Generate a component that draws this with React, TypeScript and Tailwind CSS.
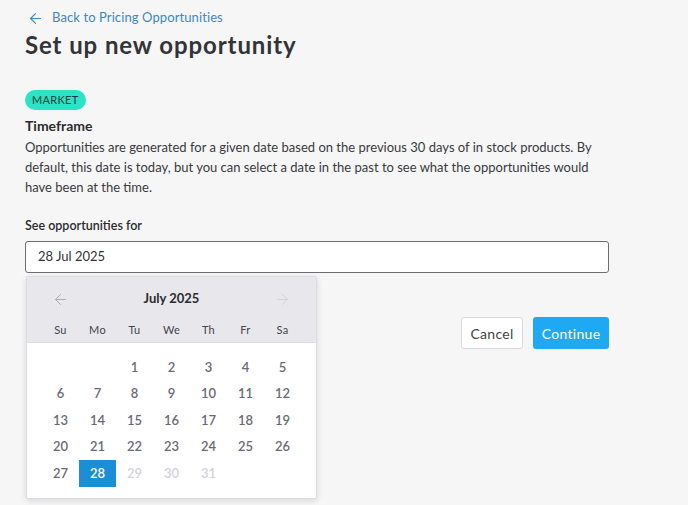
import { ArrowLeft, ArrowRight } from "lucide-react";

export default function App() {
  const weekdays = ["Su", "Mo", "Tu", "We", "Th", "Fr", "Sa"];
  // July 2025 starts on a Tuesday
  const days: (number | null)[] = [null, null];
  for (let d = 1; d <= 31; d++) days.push(d);

  return (
    <div className="min-h-[505px] bg-[#f6f6f6] px-[25px] pt-[8px] font-['Lato',sans-serif] text-[#333]">
      <div className="w-[584px]">
        {/* Back link */}
        <a className="flex h-[20px] items-center gap-[8px] text-[13px] text-[#3d87c6]">
          <ArrowLeft className="ml-[2px] h-[17px] w-[17px]" strokeWidth={1.6} />
          <span className="tracking-[0.1px]">Back to Pricing Opportunities</span>
        </a>

        <h1 className="mt-[2px] text-[24px] leading-[30px] font-bold tracking-[0.9px] text-[#333338]">
          Set up new opportunity
        </h1>

        <span className="mt-[30px] inline-flex h-[20px] items-center rounded-full bg-[#2be3c5] px-[7px] text-[11px] tracking-[0.3px] text-[#0f3f38]">
          MARKET
        </span>

        <h2 className="mt-[6px] text-[14px] leading-[20px] font-bold text-[#2c2c30]">
          Timeframe
        </h2>
        <p className="mt-[1px] text-[13px] leading-[20px] text-[#3a3a3e]">
          Opportunities are generated for a given date based on the previous 30 days of in stock products. By
          default, this date is today, but you can select a date in the past to see what the opportunities would
          have been at the time.
        </p>

        <label className="mt-[20px] block text-[12.5px] leading-[18px] font-semibold text-[#2c2c30]">
          See opportunities for
        </label>

        <div className="relative mt-[6px]">
          <div className="flex h-[32px] items-center rounded-[3px] border border-[#6e6e72] bg-white px-[12px] text-[13px] text-[#333]">
            28 Jul 2025
          </div>

          {/* Date picker popup */}
          <div className="absolute top-[35px] left-[1px] z-10 w-[291px] overflow-hidden rounded-[2px] border border-[#dcdce2] bg-white shadow-[0_2px_6px_rgba(0,0,0,0.12)]">
            <div className="border-b border-[#dcdce2] bg-[#e7e7ec] px-[15px] pt-[10px] pb-[4px]">
              <div className="flex h-[24px] items-center justify-between px-[10px]">
                <ArrowLeft className="h-[17px] w-[17px] text-[#a4a4ac]" strokeWidth={1.25} />
                <span className="text-[13px] font-bold text-[#2c2c30]">July 2025</span>
                <ArrowRight className="h-[17px] w-[17px] text-[#cfcfd6]" strokeWidth={1.25} />
              </div>
              <div className="mt-[11px] grid h-[16px] grid-cols-7 text-center text-[11px] leading-[16px] tracking-[0.3px] text-[#44444c]">
                {weekdays.map((w) => (
                  <span key={w}>{w}</span>
                ))}
              </div>
            </div>
            <div className="grid grid-cols-7 px-[15px] pt-[11px] pb-[11px] text-center text-[13px] font-semibold">
              {days.map((d, i) => {
                if (d === null) return <span key={"e" + i} className="h-[26.5px]" />;
                const selected = d === 28;
                const disabled = d > 28;
                return (
                  <span
                    key={d}
                    className={
                      "flex h-[26.5px] items-center justify-center " +
                      (selected
                        ? "bg-[#1a8fd8] text-white"
                        : disabled
                          ? "text-[#d2d2d8]"
                          : "text-[#6a6a74]")
                    }
                  >
                    {d}
                  </span>
                );
              })}
            </div>
          </div>
        </div>

        {/* Actions */}
        <div className="mt-[44px] flex justify-end gap-[10px]">
          <button className="h-[32px] w-[62px] rounded-[3px] border border-[#d9d9df] bg-white text-[14px] tracking-[0.3px] text-[#44444a]">
            Cancel
          </button>
          <button className="h-[32px] w-[76px] rounded-[3px] bg-[#1ea9f2] text-[14px] tracking-[0.3px] text-white">
            Continue
          </button>
        </div>
      </div>
    </div>
  );
}
